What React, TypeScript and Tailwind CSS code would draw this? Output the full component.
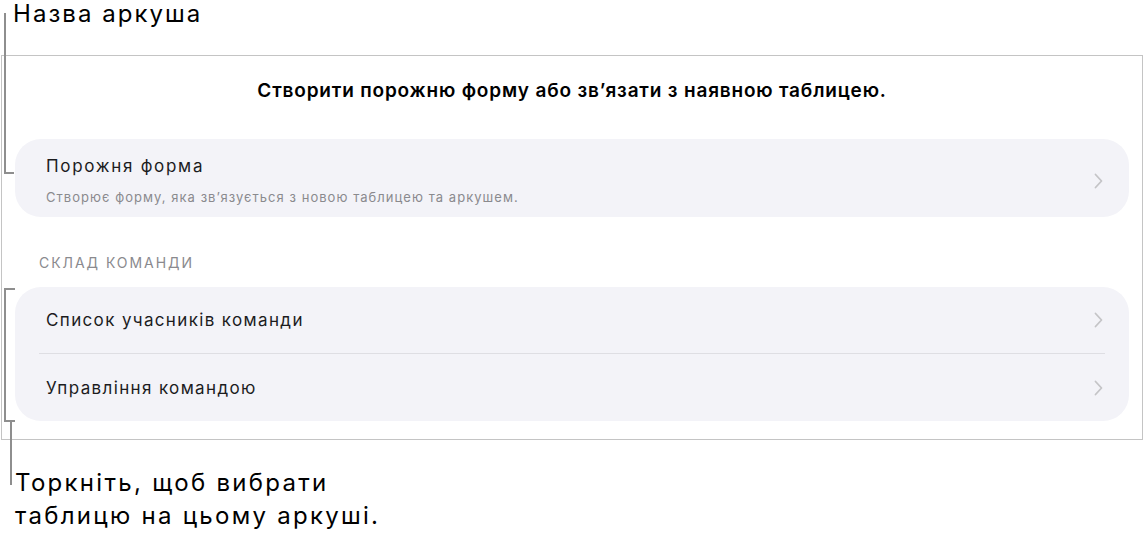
type Row = { title: string };

const TEAM_ROWS: Row[] = [
  { title: "Список учасників команди" },
  { title: "Управління командою" },
];

function Chevron() {
  return (
    <svg width="9" height="16" viewBox="0 0 9 16" className="shrink-0" aria-hidden>
      <polyline
        points="1.5,1.5 7.5,8 1.5,14.5"
        fill="none"
        stroke="#c4c4c7"
        strokeWidth="1.8"
        strokeLinecap="round"
        strokeLinejoin="round"
      />
    </svg>
  );
}

export default function App() {
  return (
    <div className="relative flex w-[1144px] h-[545px] flex-col bg-white text-[#1c1c1e] font-['Inter','Noto_Sans',sans-serif] overflow-hidden">
      <p className="pl-[13px] text-[24px] leading-[28px] tracking-[0.085em] text-black">Назва аркуша</p>

      <section className="ml-[1px] mt-[27px] flex w-[1142px] flex-col border border-[#c4c4c4] px-[13px] pt-[23px] pb-[18px]">
        <h2 className="text-center text-[19px] leading-[24px] font-semibold tracking-[0.043em] text-black">
          Створити порожню форму або зв’язати з наявною таблицею.
        </h2>

        <button className="mt-[36px] flex w-full items-center justify-between rounded-[26px] bg-[#f3f3f8] pl-[31px] pr-[26px] pt-[16px] pb-[11px] text-left">
          <div className="flex flex-col gap-[11px]">
            <span className="text-[17px] leading-[22px] tracking-[0.1em]">Порожня форма</span>
            <span className="text-[13px] leading-[18px] tracking-[0.08em] text-[#8a8a8e]">
              Створює форму, яка зв’язується з новою таблицею та аркушем.
            </span>
          </div>
          <Chevron />
        </button>

        <div className="mt-[37px] pl-[24px] text-[14px] leading-[18px] tracking-[0.14em] text-[#8a8a8e] uppercase">
          Склад команди
        </div>

        <div className="mt-[15px] flex flex-col rounded-[26px] bg-[#f3f3f8] px-[24px]">
          {TEAM_ROWS.map((row, i) => (
            <div
              key={row.title}
              className={`flex h-[67px] items-center justify-between pl-[7px] pr-[2px] ${
                i < TEAM_ROWS.length - 1 ? "border-b border-[#dedee3]" : ""
              }`}
            >
              <span className="text-[17px] leading-[22px] tracking-[0.08em]">{row.title}</span>
              <Chevron />
            </div>
          ))}
        </div>
      </section>

      <p className="mt-[26px] pl-[15px] text-[24px] leading-[33px] tracking-[0.095em] text-black">
        Торкніть, щоб вибрати
        <br />
        таблицю на цьому аркуші.
      </p>

      {/* callout: sheet name */}
      <div className="absolute left-[4px] top-[13px] w-[10px] h-[161px] border-l-2 border-b-2 border-[#8e8e8e]" />

      {/* callout: table bracket with its leader line */}
      <div className="absolute left-[4px] top-[288px] w-[11px] h-[134px] border-y-2 border-l-2 border-[#8e8e8e]" />
      <div className="absolute left-[10px] top-[420px] w-[2px] h-[65px] bg-[#8e8e8e]" />
    </div>
  );
}
